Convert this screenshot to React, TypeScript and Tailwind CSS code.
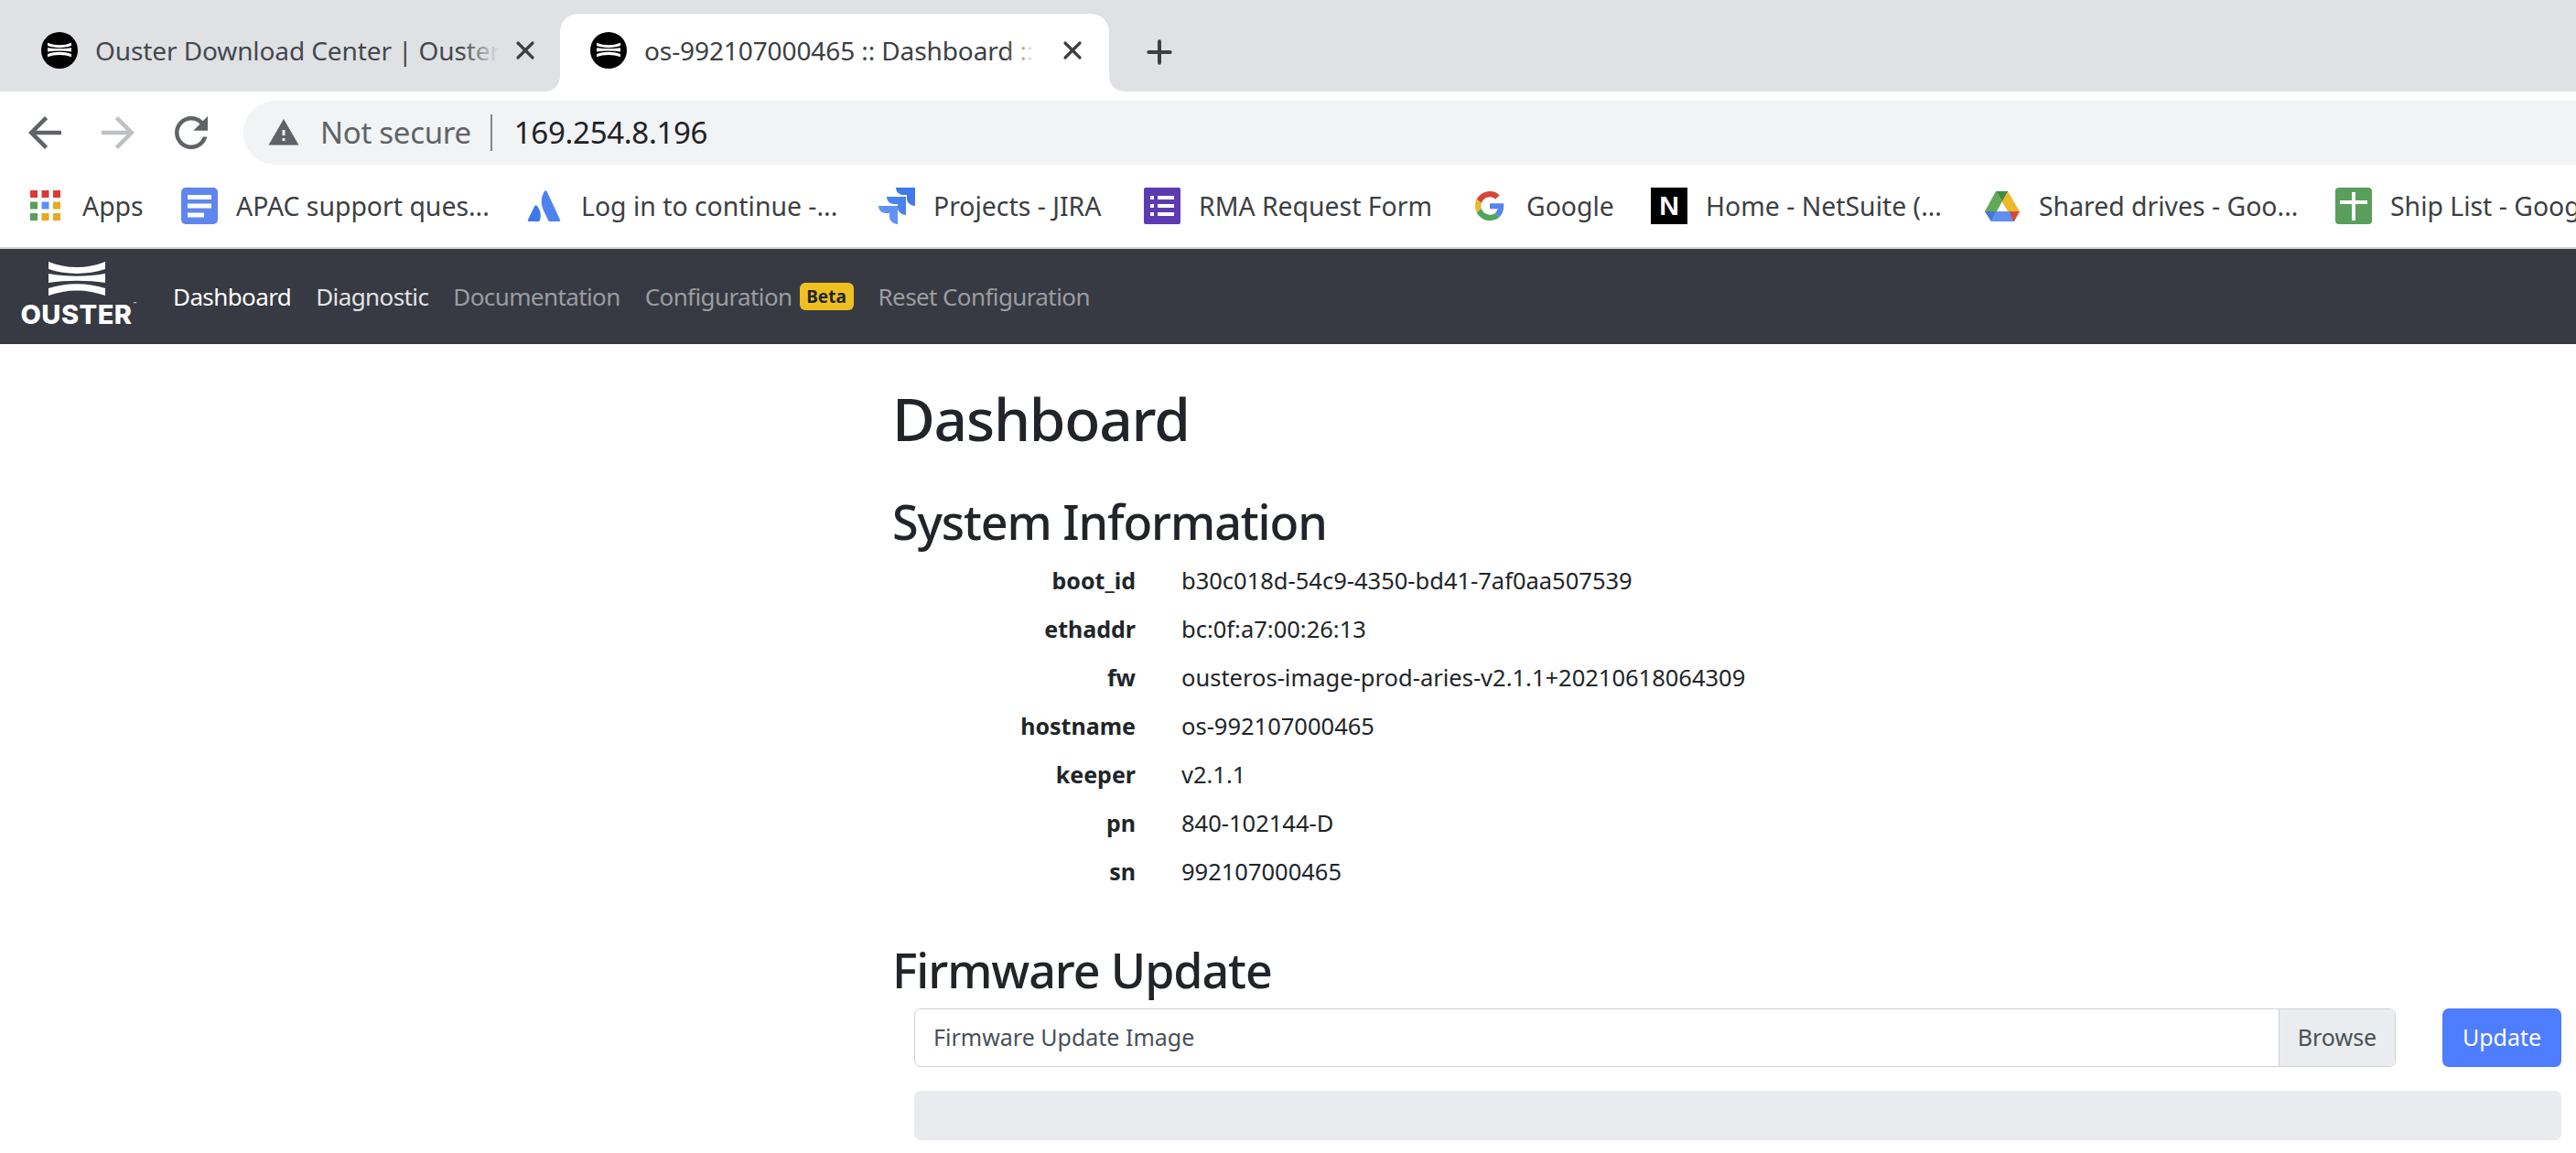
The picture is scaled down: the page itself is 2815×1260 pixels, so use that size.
import React from 'react';
import { X, Plus } from 'lucide-react';

const font = "font-['Noto_Sans',sans-serif]";

const OusterMark: React.FC<{ className?: string }> = ({ className }) => (
  <svg viewBox="0 0 62 37" className={className} fill="currentColor">
    <path d="M0 0C20 8 42 8 62 0V8C42 14.500 20 14.500 0 8Z" />
    <path d="M0 13C20 16.500 42 16.500 62 13V23C42 20 20 20 0 23Z" />
    <path d="M0 29C20 22.500 42 22.500 62 29V37C42 29.500 20 29.500 0 37Z" />
  </svg>
);

const Favicon: React.FC = () => (
  <div className="w-10 h-10 shrink-0 rounded-full bg-black text-white flex items-center justify-center">
    <OusterMark className="w-[26px] h-[17px]" />
  </div>
);

const Tab: React.FC<{ title: string; active?: boolean }> = ({ title, active }) => (
  <div className={`relative h-[85px] flex items-center pb-[6px] ${active ? 'w-[600px] bg-white rounded-t-[20px] pl-[33px] pr-[24px]' : 'w-[612px] pl-[45px] pr-[22px]'}`}>
    <Favicon />
    <div className={`relative flex-1 overflow-hidden whitespace-nowrap text-[28px] tracking-[-0.1px] ml-[19px] ${active ? 'text-[#3c4043]' : 'text-[#45474d]'}`}>
      {title}
      <div className={`absolute top-0 right-0 h-full bg-linear-to-r from-transparent ${active ? 'w-[30px] to-white' : 'w-[40px] to-[#dfe1e5]'}`} />
    </div>
    <X size={32} strokeWidth={2.4} className={`text-[#3c4043] shrink-0 ${active ? 'ml-[26px]' : 'ml-[13px]'}`} />
    {active && (
      <>
        <div className="absolute bottom-0 left-[-16px] w-4 h-4 bg-[radial-gradient(circle_at_0_0,#dfe1e5_15.500px,white_16px)]" />
        <div className="absolute bottom-0 right-[-16px] w-4 h-4 bg-[radial-gradient(circle_at_100%_0,#dfe1e5_15.500px,white_16px)]" />
      </>
    )}
  </div>
);

const AppsIcon = () => (
  <svg viewBox="0 0 34 34" className="w-[34px] h-[34px] mr-[3px]">
    {['#db3b35', '#db3b35', '#db3b35', '#5a9e5c', '#5f8ff5', '#e8a91c', '#5a9e5c', '#e8a91c', '#e8a91c'].map((c, i) => (
      <rect key={i} x={(i % 3) * 12.5} y={Math.floor(i / 3) * 12.5} width="8" height="8" fill={c} />
    ))}
  </svg>
);

const DocsIcon = () => (
  <svg viewBox="0 0 40 40" className="w-10 h-10">
    <rect width="40" height="40" rx="5" fill="#5f85ee" />
    <path d="M7 10.500H33M7 20H33M7 30H25" stroke="#fff" strokeWidth="5" />
  </svg>
);

const AtlassianIcon = () => (
  <svg viewBox="0 0 40 40" className="w-10 h-10">
    <path d="M12 20C11 19 9.500 19.500 9 20.500L2 35C1.500 36 2 37 3.500 37H13C14 37 14.500 36.500 15 35.500C16.500 31 16 25 12 20Z" fill="#3f78ea" />
    <path d="M20 4C15.500 11 16 19 19.500 26L24 35.500C24.500 36.500 25 37 26 37H35.500C37 37 37.500 36 37 35C37 35 24 7 22.500 4C22 3 20.500 3 20 4Z" fill="#4f82f0" />
  </svg>
);

const JiraIcon = () => (
  <svg viewBox="0 0 40 40" className="w-10 h-10">
    <path d="M40 0H19C19 5 23 8 27 8H31V12C31 16 35 20 40 20Z" fill="#3f78ea" />
    <path d="M30 10H9C9 15 13 18 17 18H21V22C21 26 25 30 30 30Z" fill="#4a82f0" />
    <path d="M21 20H0C0 25 4 28 8 28H12V32C12 36 16 40 21 40Z" fill="#5f93f5" />
  </svg>
);

const FormsIcon = () => (
  <svg viewBox="0 0 40 40" className="w-10 h-10">
    <rect width="40" height="40" rx="2" fill="#5b3bb1" />
    <path d="M7 11H11M15 11H33M7 20H11M15 20H33M7 29H11M15 29H33" stroke="#fff" strokeWidth="4" />
  </svg>
);

const GoogleIcon = () => (
  <svg viewBox="0 0 48 48" className="w-8 h-8 mx-1">
    <path fill="#d9443a" d="M24 9.500c3.500 0 6.700 1.200 9.200 3.600l6.900-6.900C35.900 2.400 30.500 0 24 0 14.600 0 6.500 5.400 2.600 13.200l8 6.200C12.400 13.700 17.700 9.500 24 9.500z" />
    <path fill="#5587ec" d="M47 24.500c0-1.600-.2-3.100-.4-4.500H24v9h12.900c-.6 3-2.200 5.500-4.700 7.200l7.700 6c4.500-4.100 7.100-10.300 7.100-17.700z" />
    <path fill="#ecb92e" d="M10.500 28.600c-.5-1.400-.8-3-.8-4.600s.3-3.100.8-4.600l-8-6.200C.9 16.500 0 20.100 0 24s.9 7.500 2.600 10.800l7.900-6.200z" />
    <path fill="#4ea65c" d="M24 48c6.500 0 11.900-2.100 15.900-5.800l-7.700-6c-2.100 1.400-4.900 2.300-8.200 2.300-6.300 0-11.600-4.200-13.500-9.900l-8 6.200C6.500 42.600 14.600 48 24 48z" />
  </svg>
);

const NetSuiteIcon = () => (
  <div className="w-10 h-10 bg-black text-white flex items-center justify-center text-[30px] font-bold font-['Liberation_Sans',sans-serif]">N</div>
);

const DriveIcon = () => (
  <svg viewBox="0 0 40 40" className="w-10 h-10">
    <path d="M13 4H26L39 26H26Z" fill="#edbb2a" />
    <path d="M13 4L1 26L8 37L20 15Z" fill="#5fab55" />
    <path d="M13 4H26L20 15L16.500 9Z" fill="#3f8a45" />
    <path d="M13 26H39L32 37H8Z" fill="#5f8ff0" />
    <path d="M1 26H13L8 37Z" fill="#4a74d8" />
    <path d="M28 26H39L33 37H32Z" fill="#d44a3a" />
  </svg>
);

const SheetsIcon = () => (
  <svg viewBox="0 0 40 40" className="w-10 h-10">
    <rect width="40" height="40" rx="4" fill="#5a9e5c" />
    <path d="M5 16H35M20 5V36" stroke="#fff" strokeWidth="4" />
  </svg>
);

const bookmarks: { icon: React.ReactNode; label: string; width: string }[] = [
  { icon: <AppsIcon />, label: 'Apps', width: 'w-[165px]' },
  { icon: <DocsIcon />, label: 'APAC support ques...', width: 'w-[377px]' },
  { icon: <AtlassianIcon />, label: 'Log in to continue -...', width: 'w-[385px]' },
  { icon: <JiraIcon />, label: 'Projects - JIRA', width: 'w-[290px]' },
  { icon: <FormsIcon />, label: 'RMA Request Form', width: 'w-[358px]' },
  { icon: <GoogleIcon />, label: 'Google', width: 'w-[196px]' },
  { icon: <NetSuiteIcon />, label: 'Home - NetSuite (...', width: 'w-[364px]' },
  { icon: <DriveIcon />, label: 'Shared drives - Goo...', width: 'w-[384px]' },
  { icon: <SheetsIcon />, label: 'Ship List - Google Sheets', width: 'w-[400px]' },
];

const navItems = [
  { label: 'Dashboard', color: 'text-white' },
  { label: 'Diagnostic', color: 'text-[#e3e3e5]' },
  { label: 'Documentation', color: 'text-[#9b9da1]' },
];

const sysInfo = [
  ['boot_id', 'b30c018d-54c9-4350-bd41-7af0aa507539'],
  ['ethaddr', 'bc:0f:a7:00:26:13'],
  ['fw', 'ousteros-image-prod-aries-v2.1.1+20210618064309'],
  ['hostname', 'os-992107000465'],
  ['keeper', 'v2.1.1'],
  ['pn', '840-102144-D'],
  ['sn', '992107000465'],
];

export default function App() {
  return (
    <div className={`h-[1260px] w-[2815px] overflow-hidden bg-white ${font}`}>
      {/* Tab strip */}
      <div className="h-[100px] bg-[#dfe1e5] flex items-end">
        <Tab title="Ouster Download Center | Ouster" />
        <Tab title="os-992107000465 :: Dashboard :: Ouster" active />
        <Plus size={40} strokeWidth={2.4} className="text-[#3c4043] ml-[35px] mb-[23px]" />
      </div>

      {/* Toolbar */}
      <div className="h-[80px] flex items-start pt-[10px]">
        <div className="w-[266px] flex items-center pl-[22px] h-[70px] text-[#5f6368]">
          <svg viewBox="0 0 24 24" className="w-[54px] h-[54px]" fill="currentColor"><path d="M20 11H7.830l5.590-5.590L12 4l-8 8 8 8 1.410-1.410L7.830 13H20v-2z" /></svg>
          <svg viewBox="0 0 24 24" className="w-[54px] h-[54px] ml-[26px] text-[#bdc1c6]" fill="currentColor"><path d="M12 4l-1.410 1.410L16.170 11H4v2h12.170l-5.580 5.590L12 20l8-8z" /></svg>
          <svg viewBox="0 0 24 24" className="w-[54px] h-[54px] ml-[26px]" fill="currentColor"><path d="M17.650 6.350C16.200 4.900 14.210 4 12 4c-4.420 0-7.990 3.580-7.990 8s3.570 8 7.990 8c3.730 0 6.840-2.550 7.730-6h-2.080c-.820 2.330-3.040 4-5.650 4-3.310 0-6-2.690-6-6s2.690-6 6-6c1.660 0 3.140.690 4.220 1.780L13 11h7V4l-2.350 2.350z" /></svg>
        </div>
        <div className="flex-1 h-[70px] bg-[#f1f3f4] rounded-l-[35px] flex items-center pl-[26px]">
          <svg viewBox="0 0 24 24" className="w-[36px] h-[36px] text-[#5f6368]" fill="currentColor"><path d="M1 21h22L12 2 1 21zm12-3h-2v-2h2v2zm0-4h-2v-4h2v4z" /></svg>
          <span className="ml-[22px] text-[33px] tracking-[-0.3px] text-[#5f6368]">Not secure</span>
          <div className="w-[2px] h-[40px] bg-[#80868b] ml-[21px]" />
          <span className="ml-[24px] text-[33px] tracking-[-0.3px] text-[#202124]">169.254.8.196</span>
        </div>
      </div>

      {/* Bookmarks */}
      <div className="h-[92px] pl-[33px] flex items-center overflow-hidden border-b-[2px] border-[#d5d7da]">
        {bookmarks.map((b) => (
          <div key={b.label} className={`flex items-center shrink-0 ${b.width}`}>
            <div className="shrink-0">{b.icon}</div>
            <span className="ml-[20px] text-[28.400px] text-[#3c4043] whitespace-nowrap">{b.label}</span>
          </div>
        ))}
      </div>

      {/* Navbar */}
      <nav className="h-[104px] bg-[#373a42] flex items-center pl-[22px]">
        <div className="w-[123px] flex flex-col items-center text-white -mt-[6px]">
          <OusterMark className="w-[62px] h-[37px]" />
          <span className="relative mt-[8px] text-[29px] leading-[26px] font-extrabold font-['Inter',sans-serif] tracking-[0.5px]">
            OUSTER
            <span className="absolute top-[-2px] right-[-5px] text-[6px] leading-[8px] font-normal">™</span>
          </span>
        </div>
        <div className="flex items-center ml-[44px] gap-[27px] text-[26px] tracking-[-0.6px]">
          {navItems.map((n) => (
            <span key={n.label} className={n.color}>{n.label}</span>
          ))}
          <span className="flex items-center text-[#9b9da1]">
            Configuration
            <span className="ml-[8px] h-[30px] w-[59px] rounded-[6px] bg-[#f0c020] text-[#212529] text-[19px] tracking-normal font-bold flex items-center justify-center">Beta</span>
          </span>
          <span className="text-[#9b9da1]">Reset Configuration</span>
        </div>
      </nav>

      {/* Main */}
      <main className="pl-[975px] pr-[16px] text-[#212529]">
        <h1 className="mt-[42px] text-[64px] leading-[80px] font-medium tracking-[-1.2px]">Dashboard</h1>
        <h2 className="mt-[40px] text-[52px] leading-[64px] font-medium tracking-[-1.1px]">System Information</h2>
        <div className="mt-[6px]">
          {sysInfo.map(([k, v]) => (
            <div key={k} className="h-[53px] flex items-center text-[25px]">
              <div className="w-[266px] text-right font-bold">{k}</div>
              <div className="ml-[50px] text-[25.500px]">{v}</div>
            </div>
          ))}
        </div>
        <h2 className="mt-[49px] text-[52px] leading-[64px] font-medium tracking-[-1.1px]">Firmware Update</h2>
        <div className="ml-[24px] mt-[10px] flex gap-[51px]">
          <div className="flex-1 h-[64px] border border-[#cfd0d6] rounded-[7px] flex items-center overflow-hidden">
            <span className="flex-1 pl-[20px] text-[25px] text-[#495057]">Firmware Update Image</span>
            <span className="h-full w-[127px] bg-[#ebecef] border-l border-[#cfd0d6] flex items-center justify-center text-[25px] text-[#495057]">Browse</span>
          </div>
          <button className="w-[130px] h-[64px] rounded-[7px] bg-[#4f7dff] text-white text-[25px]">Update</button>
        </div>
        <div className="ml-[24px] mt-[26px] h-[54px] rounded-[7px] bg-[#eaebef]" />
      </main>
    </div>
  );
}
